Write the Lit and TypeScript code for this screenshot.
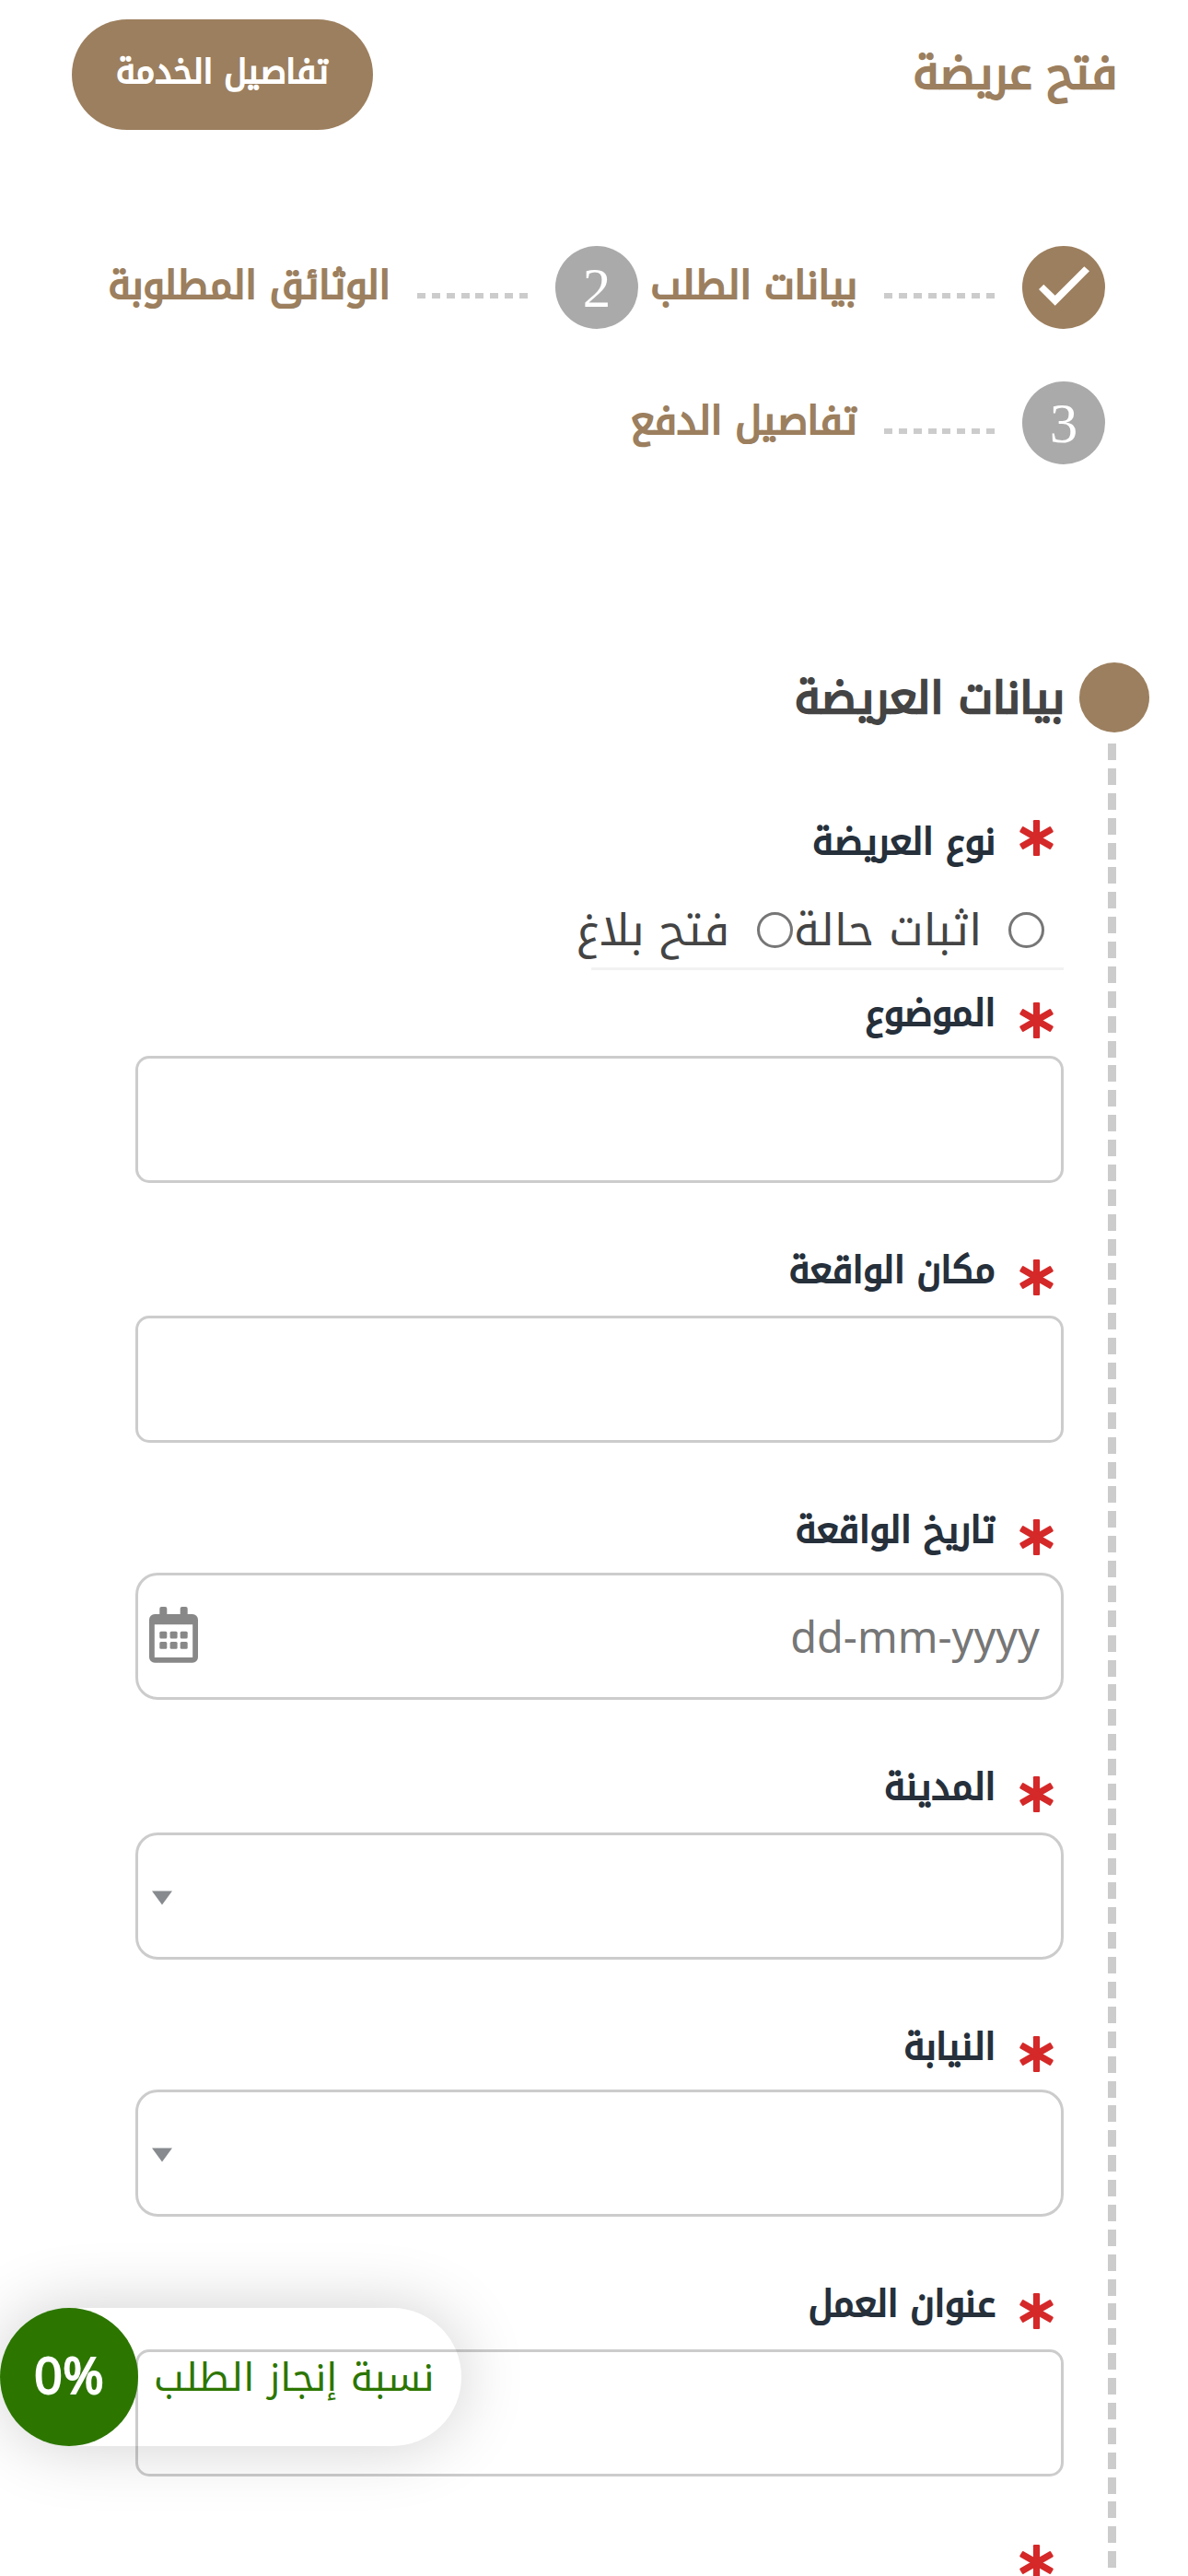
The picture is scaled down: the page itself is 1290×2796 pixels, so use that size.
import { LitElement, html, css, svg, nothing } from "lit";
import { customElement, property } from "lit/decorators.js";
import { classMap } from "lit/directives/class-map.js";

type Kind = "text" | "date" | "select" | "none";

interface Field {
  label: string;
  kind: Kind;
  loose?: boolean;
}

const FIELDS: Field[] = [
  { label: "الموضوع", kind: "text" },
  { label: "مكان الواقعة", kind: "text", loose: true },
  { label: "تاريخ الواقعة", kind: "date" },
  { label: "المدينة", kind: "select", loose: true },
  { label: "النيابة", kind: "select" },
  { label: "عنوان العمل", kind: "text", loose: true },
  { label: "", kind: "none" },
];

const asterisk = html`<svg class="star" viewBox="0 0 37 39" width="37" height="39">
  ${[0, 60, 120].map(
    (a) => svg`<rect x="14.9" y="0" width="7.2" height="39" rx="1.2" fill="#d52828" transform="rotate(${a} 18.5 19.5)"></rect>`
  )}
</svg>`;

const calendar = html`<svg class="calendar" viewBox="0 0 53 61" width="53" height="61" fill="#888">
  <rect x="11.3" y="0" width="8" height="12" rx="2"></rect>
  <rect x="33.7" y="0" width="8" height="12" rx="2"></rect>
  <path fill-rule="evenodd" d="M6 8H47a6 6 0 0 1 6 6V54.800a6 6 0 0 1-6 6H6a6 6 0 0 1-6-6V14a6 6 0 0 1 6-6ZM5.800 19.300V55H47.200V19.300Z"></path>
  ${[26.7, 38].map((y) =>
    [11.3, 22.6, 33.7].map((x) => svg`<rect x=${x} y=${y} width="8" height="7.800" rx="1.500"></rect>`)
  )}
</svg>`;

const arrow = html`<svg class="arrow" viewBox="0 0 24 16" width="24" height="16">
  <path d="M1 0.500H23L12 15.500Z" fill="#878b8f"></path>
</svg>`;

@customElement("request-step")
export class RequestStep extends LitElement {
  @property({ type: Number }) number = 1;
  @property({ type: Boolean }) done = false;
  @property() label = "";

  static styles = css`
    :host {
      display: flex;
      align-items: flex-start;
      height: 90px;
    }
    .circle {
      flex: none;
      width: 90px;
      height: 90px;
      border-radius: 50%;
      background: #aaa;
      color: #fff;
      font: 61px/91px "Liberation Serif", serif;
      text-align: center;
    }
    .circle.done {
      background: #9c7f5e;
    }
    .circle svg {
      display: block;
    }
    .dots {
      flex: none;
      width: 120px;
      height: 6px;
      margin: 51px 30px 0 29px;
      background: repeating-linear-gradient(to right, #ccc 0 9px, transparent 9px 15.86px);
    }
    .label {
      font-size: 42px;
      line-height: 86px;
      white-space: nowrap;
      color: #9c7f5e;
      -webkit-text-stroke: 0.05em currentColor;
    }
  `;

  render() {
    return html`
      <div class=${classMap({ circle: true, done: this.done })}>
        ${this.done
          ? html`<svg viewBox="0 0 90 90" width="90" height="90">
              <path d="M18 47L23.300 41.700L35.700 53.700L67.300 22.300L73 27.300L35.700 64.700Z" fill="#fff"></path>
            </svg>`
          : this.number}
      </div>
      <div class="dots"></div>
      <div class="label">${this.label}</div>
    `;
  }
}

@customElement("app-root")
export class AppRoot extends LitElement {
  static styles = css`
    :host {
      display: block;
      position: relative;
      box-sizing: border-box;
      height: 2796px;
      overflow: hidden;
      direction: rtl;
      background: #fff;
      color: #444;
      font-family: "Noto Kufi Arabic", "Noto Sans", sans-serif;
    }
    * {
      box-sizing: border-box;
    }
    .bold {
      -webkit-text-stroke: 0.05em currentColor;
    }
    .header {
      display: flex;
      justify-content: space-between;
      padding: 21px 77px 0 78px;
    }
    .title {
      font-size: 48px;
      line-height: 118px;
      color: #9c7f5e;
    }
    .details {
      height: 120px;
      padding: 0 48px;
      border-radius: 60px;
      background: #9c7f5e;
      color: #fff;
      font-size: 36px;
      line-height: 115px;
    }
    .steps {
      display: flex;
      flex-wrap: wrap;
      column-gap: 13.5px;
      row-gap: 57px;
      margin-top: 126px;
      padding: 0 90px;
    }
    .section {
      display: flex;
      height: 2077px;
      margin-top: 215px;
      padding: 0 42px 0 147px;
    }
    .rail {
      flex: none;
      display: flex;
      flex-direction: column;
      width: 76px;
    }
    .dot {
      flex: none;
      height: 76px;
      border-radius: 50%;
      background: #9c7f5e;
    }
    .line {
      flex: 1;
      width: 9px;
      margin: 12px 36px 0 0;
      background: repeating-linear-gradient(to bottom, #ccc 0 18px, transparent 18px 26.88px);
    }
    .form {
      flex: 1;
      padding-right: 17px;
    }
    .heading {
      height: 76px;
      margin-right: -1px;
      font-size: 48px;
      line-height: 79px;
      white-space: nowrap;
    }
    .label-row {
      display: flex;
      align-items: flex-start;
      height: 60px;
      padding-right: 11px;
      gap: 26px;
      color: #26303b;
      font-size: 39px;
      line-height: 58px;
      white-space: nowrap;
    }
    .star {
      flex: none;
      margin-top: 17px;
      overflow: visible;
    }
    .type {
      margin-top: 90px;
    }
    .type .star {
      margin-top: 5px;
    }
    .radios {
      display: flex;
      width: 513px;
      height: 83px;
      margin: 25px 0 18px;
      border-bottom: 3px solid #f2f2f2;
      font-size: 48px;
      line-height: 80px;
      white-space: nowrap;
    }
    .radio {
      flex: none;
      width: 39px;
      height: 39px;
      margin: 20px 21px 0 29px;
      border: 3px solid #767676;
      border-radius: 50%;
    }
    .option + .radio {
      margin-right: 1px;
      margin-left: 30px;
    }
    .option {
      flex: none;
    }
    .field {
      margin-bottom: 66px;
    }
    .field.none .star {
      margin-top: 8px;
    }
    .box {
      position: relative;
      z-index: 1;
      display: flex;
      align-items: center;
      height: 138px;
      margin-top: 15px;
      border: 3px solid rgba(0, 0, 0, 0.2);
      border-radius: 15px;
    }
    .loose .box {
      margin-top: 18px;
    }
    .date .box,
    .select .box {
      border-radius: 24px;
    }
    .date .box {
      justify-content: space-between;
      padding: 0 23px 0 12px;
    }
    .select .box {
      justify-content: flex-end;
      padding: 3px 0 0 14px;
    }
    .placeholder {
      color: #767676;
      font: 46.800px/132px "Noto Sans", sans-serif;
      direction: ltr;
    }
    .calendar {
      margin-bottom: 3px;
    }
    .progress {
      position: absolute;
      bottom: 141px;
      left: 0;
      width: 501px;
      height: 150px;
      padding-right: 29.500px;
      border-radius: 75px;
      background: #fff;
      box-shadow: 0 0 72px rgba(0, 0, 0, 0.19);
      color: #2c7600;
      font-size: 42px;
      line-height: 152px;
      white-space: nowrap;
    }
    .percent {
      position: absolute;
      z-index: 2;
      top: 0;
      left: 0;
      width: 150px;
      height: 150px;
      border-radius: 50%;
      background: #2c7600;
      color: #fff;
      font: 54px/144px "Noto Sans", sans-serif;
      text-align: center;
      direction: ltr;
      -webkit-text-stroke: 0.035em currentColor;
    }
  `;

  private control(kind: Kind) {
    if (kind === "none") return nothing;
    return html`<div class="box">
      ${kind === "date" ? html`<span class="placeholder">dd-mm-yyyy</span>${calendar}` : nothing}
      ${kind === "select" ? arrow : nothing}
    </div>`;
  }

  render() {
    return html`
      <div class="header">
        <div class="title bold">فتح عريضة</div>
        <div class="details bold">تفاصيل الخدمة</div>
      </div>
      <div class="steps">
        <request-step .number=${1} done .label=${"بيانات الطلب"}></request-step>
        <request-step .number=${2} .label=${"الوثائق المطلوبة"}></request-step>
        <request-step .number=${3} .label=${"تفاصيل الدفع"}></request-step>
      </div>
      <div class="section">
        <div class="rail">
          <div class="dot"></div>
          <div class="line"></div>
        </div>
        <div class="form">
          <div class="heading bold">بيانات العريضة</div>
          <div class="label-row type">${asterisk}<span class="bold">نوع العريضة</span></div>
          <div class="radios">
            <span class="radio"></span><span class="option">اثبات حالة</span>
            <span class="radio"></span><span class="option">فتح بلاغ</span>
          </div>
          ${FIELDS.map(
            (f) => html`<div class=${classMap({ field: true, [f.kind]: true, loose: !!f.loose })}>
              <div class="label-row">${asterisk}<span class="bold">${f.label}</span></div>
              ${this.control(f.kind)}
            </div>`
          )}
        </div>
      </div>
      <div class="progress">
        نسبة إنجاز الطلب
        <div class="percent">0%</div>
      </div>
    `;
  }
}
